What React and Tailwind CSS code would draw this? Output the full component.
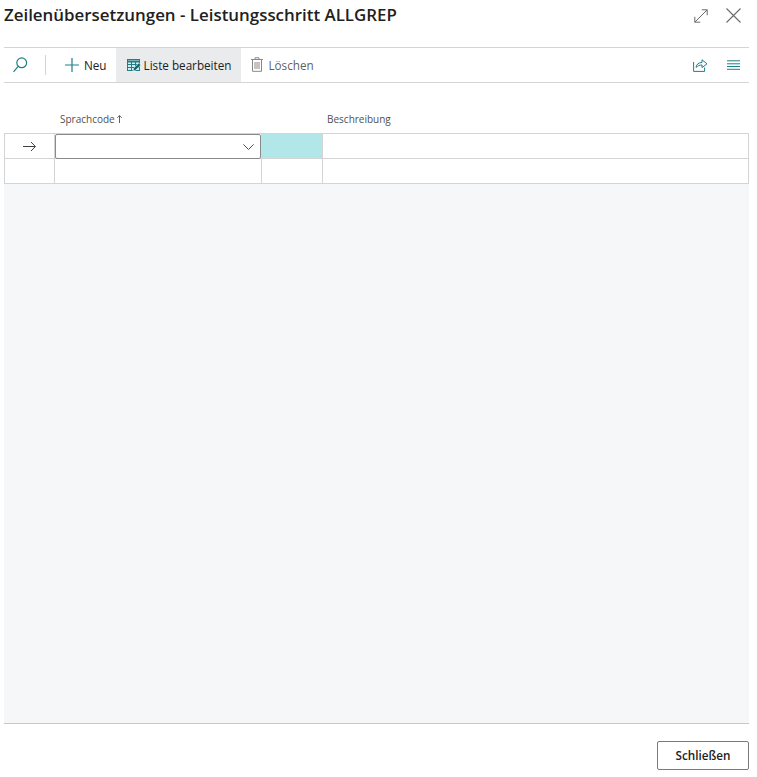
import React from 'react';

const teal = '#1f7f86';

const SearchIcon = () => (
  <svg width="16" height="18" viewBox="0 0 16 18" fill="none" stroke={teal} strokeWidth="1.2">
    <circle cx="9.7" cy="6.8" r="4.9" />
    <path d="M6.2 10.4 1.5 15.8" />
  </svg>
);

const PlusIcon = () => (
  <svg width="14" height="14" viewBox="0 0 14 14" fill="none" stroke={teal} strokeWidth="1.2">
    <path d="M7 0v14M0 7h14" />
  </svg>
);

const EditListIcon = () => (
  <svg width="14" height="13" viewBox="0 0 14 13" fill="none">
    <rect x="0.5" y="0.5" width="12" height="11" fill="#d5ecee" stroke={teal} />
    <path d="M0.5 2.500h12" stroke={teal} strokeWidth="2" />
    <path d="M0.5 5.500h12M0.5 8.500h12M4.500 3v8.500M8.500 3v8.500" stroke={teal} />
    <path d="M6 12 6.600 9.200 11.800 4l2 2-5.200 5.200z" fill="#12626a" stroke="#fff" strokeWidth="0.6" />
  </svg>
);

const TrashIcon = () => (
  <svg width="12" height="15" viewBox="0 0 12 15" fill="none" stroke="#8a8886">
    <path d="M0 2.500h12M4 2.500V.8h4v1.700" />
    <path d="M1.500 2.500v11.800h9V2.500" />
    <path d="M4 5v7M6 5v7M8 5v7" />
  </svg>
);

const ShareIcon = () => (
  <svg width="15" height="14" viewBox="0 0 15 14" fill="none" stroke={teal}>
    <path d="M.6 4v9.400h11V9.500" />
    <path d="M3 9.500c.4-3 2.400-5 6-5V1.800l5 4-5 3.800V7C6.600 7 4.600 7.800 3 9.500z" />
  </svg>
);

const ListIcon = () => (
  <svg width="13" height="10" viewBox="0 0 13 10" fill="none" stroke={teal}>
    <path d="M0 .8h13M0 3.800h13M0 6.500h13M0 9.300h13" />
  </svg>
);

const ExpandIcon = () => (
  <svg width="14" height="14" viewBox="0 0 14 14" fill="none" stroke="#6b6a69">
    <path d="M.8 13.200 13.200.8M7.800.8h5.400v5.400M.8 7.800v5.400h5.400" />
  </svg>
);

const CloseIcon = () => (
  <svg width="15" height="15" viewBox="0 0 15 15" fill="none" stroke="#6b6a69" strokeWidth="1.1">
    <path d="M.5.500l14 14M14.500.500l-14 14" />
  </svg>
);

const ArrowIcon = () => (
  <svg width="13" height="11" viewBox="0 0 13 11" fill="none" stroke="#404040">
    <path d="M0 5.500h12.300M8 1 12.400 5.500 8 10" />
  </svg>
);

const ChevronIcon = () => (
  <svg width="11" height="6" viewBox="0 0 11 6" fill="none" stroke="#505050">
    <path d="M.4.400 5.500 5.500 10.600.400" />
  </svg>
);

const SortUpIcon = () => (
  <svg width="5" height="8" viewBox="0 0 5 8" fill="none" stroke="#505050" strokeWidth="0.9">
    <path d="M2.500 8V.6M.3 2.800 2.500.6l2.200 2.200" />
  </svg>
);

const App = () => {
  return (
    <div className="w-[757px] h-[777px] bg-white flex flex-col font-['Open_Sans',sans-serif] text-[#212121]">
      <div className="h-[47px] flex items-start justify-between pl-[4px] pr-[16px] shrink-0">
        <h1 className="mt-[3px] text-[16.900px] leading-[24px] font-semibold">Zeilenübersetzungen - Leistungsschritt ALLGREP</h1>
        <div className="flex items-center gap-[18px] mt-[8px]">
          <ExpandIcon />
          <CloseIcon />
        </div>
      </div>

      <div className="ml-[4px] mr-[8px] h-[36px] border-y border-[#d4d4d4] flex items-center text-[11.700px] shrink-0">
        <div className="w-[41px] flex justify-start pl-[8px]">
          <SearchIcon />
        </div>
        <div className="w-px h-[20px] bg-[#d4d4d4]" />
        <div className="flex items-center gap-[5px] pl-[19px] pr-[9px]">
          <PlusIcon />
          <span className="translate-y-px">Neu</span>
        </div>
        <div className="h-full flex items-center gap-[3px] bg-[#eaebec] pl-[11px] pr-[10px]">
          <EditListIcon />
          <span className="translate-y-px">Liste bearbeiten</span>
        </div>
        <div className="flex items-center gap-[5px] pl-[10px] text-[#5f5f5f]">
          <TrashIcon />
          <span className="translate-y-px">Löschen</span>
        </div>
        <div className="ml-auto flex items-center gap-[19px] pr-[9px]">
          <ShareIcon />
          <ListIcon />
        </div>
      </div>

      <div className="ml-[4px] mr-[8px] h-[50px] flex items-end pb-[7px] text-[10px] leading-[14px] text-[#505050] shrink-0">
        <div className="w-[55px] shrink-0" />
        <div className="w-[268px] shrink-0 flex items-center gap-[3px]">
          <span className="translate-x-px">Sprachcode</span>
          <SortUpIcon />
        </div>
        <div>Beschreibung</div>
      </div>

      <div className="ml-[4px] mr-[8px] border-x border-t border-[#d4d4d4] shrink-0">
        <div className="h-[25px] flex border-b border-[#d4d4d4]">
          <div className="w-[50px] flex items-center justify-center border-r border-[#d4d4d4]">
            <ArrowIcon />
          </div>
          <div className="w-[206px] border border-[#8a8a8a] rounded-[2px] bg-white flex items-center justify-end pr-[6px] h-[25px] z-10">
            <ChevronIcon />
          </div>
          <div className="w-[62px] bg-[#b2e7ea] border-r border-[#d4d4d4]" />
          <div className="flex-1" />
        </div>
        <div className="h-[25px] flex border-b border-[#d4d4d4]">
          <div className="w-[50px] border-r border-[#d4d4d4]" />
          <div className="w-[207px] border-r border-[#d4d4d4]" />
          <div className="w-[61px] border-r border-[#d4d4d4]" />
          <div className="flex-1" />
        </div>
      </div>

      <div className="ml-[4px] mr-[8px] flex-1 bg-[#f5f7f8] border-b border-[#c8c8c8]" />

      <div className="h-[53px] flex justify-end items-start pt-[17px] pr-[8px] shrink-0">
        <button className="w-[92px] h-[29px] border border-[#7a7a7a] rounded-[2px] bg-white text-[11.700px] font-semibold text-[#212121]">
          Schließen
        </button>
      </div>
    </div>
  );
};

export default App;
